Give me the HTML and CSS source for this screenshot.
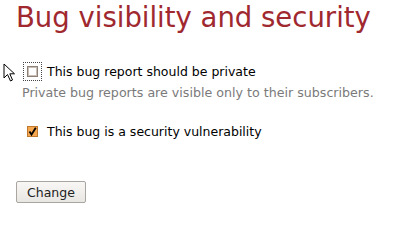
FILE: index.html
```html
<!DOCTYPE html>
<html>
<head>
<meta charset="utf-8">
<link rel="stylesheet" href="styles.css">
</head>
<body>
<div class="page">
  <h1 class="title">Bug visibility and security</h1>
  <div class="option option-private">
    <span class="box box-empty focused"></span>
    <span class="label">This bug report should be private</span>
  </div>
  <p class="hint">Private bug reports are visible only to their subscribers.</p>
  <div class="option option-security">
    <span class="box box-checked">
      <svg viewBox="0 0 11 11" width="11" height="11"><path d="M2.5 5.5 L4.5 8.5 L8.8 1.8" fill="none" stroke="#000" stroke-width="1.8"/></svg>
    </span>
    <span class="label">This bug is a security vulnerability</span>
  </div>
  <div class="actions">
    <button class="btn">Change</button>
  </div>
</div>
<svg class="cursor" width="14" height="20" viewBox="0 0 14 20">
  <path d="M1 1 L1 15 L4.5 11.5 L7.5 18 L9.5 17 L6.8 10.8 L11.5 10.8 Z" fill="#fff" stroke="#000" stroke-width="1" stroke-linejoin="miter"/>
</svg>
</body>
</html>
```
FILE: styles.css
```css
html, body {
  margin: 0;
  padding: 0;
  background: #fff;
}
body {
  font-family: "DejaVu Sans", sans-serif;
  color: #000;
  position: relative;
  width: 407px;
  height: 227px;
  overflow: hidden;
}
.page {
  padding: 0 16px;
}
.title {
  margin: 0;
  padding-top: 0;
  font-size: 27.5px;
  font-weight: normal;
  line-height: 34px;
  color: #a0282f;
}
.option {
  display: flex;
  align-items: center;
  margin-left: 11px;
  gap: 9px;
  font-size: 12.5px;
  line-height: 16px;
}
.label {
  position: relative;
  top: 1px;
}
.option-private {
  margin-top: 29px;
}
.option-security {
  margin-top: 23px;
}
.box {
  box-sizing: border-box;
  width: 11px;
  height: 11px;
  flex: none;
  display: block;
}
.box svg {
  display: block;
  margin: -1px;
}
.box-empty {
  border: 1px solid #8d8177;
  box-shadow: inset 0 0 0 1px #c9bfb6;
  background: #fff;
}
.focused {
  outline: 1px dotted #444;
  outline-offset: 3px;
}
.box-checked {
  border: 1px solid #c0782c;
  background: #f5a850;
}
.hint {
  margin: 6px 0 0 6px;
  font-size: 12.65px;
  line-height: 15px;
  color: #7a7a7a;
}
.actions {
  margin-top: 42px;
}
.btn {
  box-sizing: border-box;
  width: 70px;
  height: 22px;
  padding: 0;
  font-family: "DejaVu Sans", sans-serif;
  font-size: 12.5px;
  color: #222;
  border: 1px solid #a9a5a0;
  border-radius: 2px;
  background: linear-gradient(#f8f7f5, #e9e7e3);
}
.cursor {
  position: absolute;
  left: 3px;
  top: 63px;
}
```
